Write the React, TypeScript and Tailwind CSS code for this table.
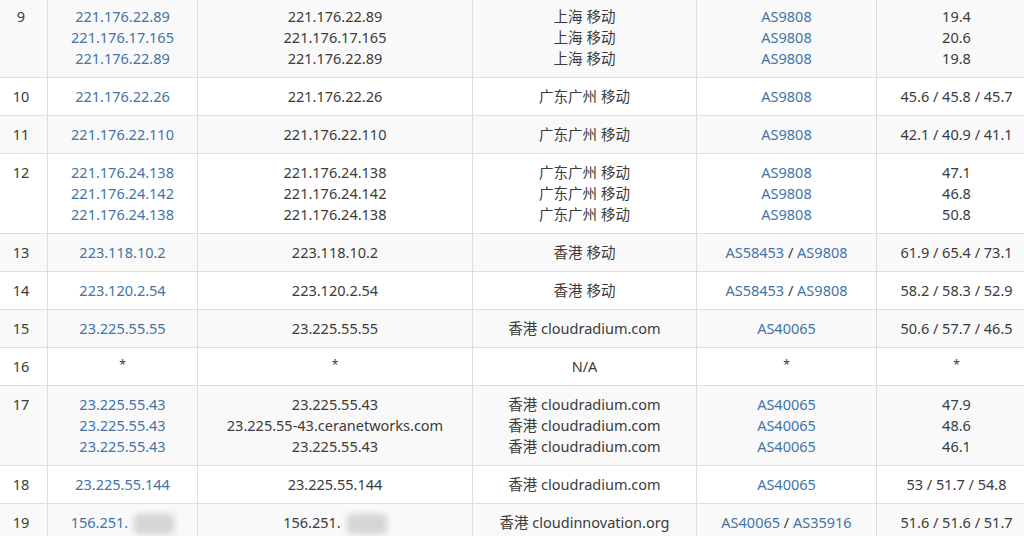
type Hop = {
  no: number;
  ips: string[];
  hosts: string[];
  locs: string[];
  as: string[][];
  rtt: string[];
  masked?: boolean;
};

const hops: Hop[] = [
  {
    no: 9,
    ips: ["221.176.22.89", "221.176.17.165", "221.176.22.89"],
    hosts: ["221.176.22.89", "221.176.17.165", "221.176.22.89"],
    locs: ["上海 移动", "上海 移动", "上海 移动"],
    as: [["AS9808"], ["AS9808"], ["AS9808"]],
    rtt: ["19.4", "20.6", "19.8"],
  },
  {
    no: 10,
    ips: ["221.176.22.26"],
    hosts: ["221.176.22.26"],
    locs: ["广东广州 移动"],
    as: [["AS9808"]],
    rtt: ["45.6 / 45.8 / 45.7"],
  },
  {
    no: 11,
    ips: ["221.176.22.110"],
    hosts: ["221.176.22.110"],
    locs: ["广东广州 移动"],
    as: [["AS9808"]],
    rtt: ["42.1 / 40.9 / 41.1"],
  },
  {
    no: 12,
    ips: ["221.176.24.138", "221.176.24.142", "221.176.24.138"],
    hosts: ["221.176.24.138", "221.176.24.142", "221.176.24.138"],
    locs: ["广东广州 移动", "广东广州 移动", "广东广州 移动"],
    as: [["AS9808"], ["AS9808"], ["AS9808"]],
    rtt: ["47.1", "46.8", "50.8"],
  },
  {
    no: 13,
    ips: ["223.118.10.2"],
    hosts: ["223.118.10.2"],
    locs: ["香港 移动"],
    as: [["AS58453", "AS9808"]],
    rtt: ["61.9 / 65.4 / 73.1"],
  },
  {
    no: 14,
    ips: ["223.120.2.54"],
    hosts: ["223.120.2.54"],
    locs: ["香港 移动"],
    as: [["AS58453", "AS9808"]],
    rtt: ["58.2 / 58.3 / 52.9"],
  },
  {
    no: 15,
    ips: ["23.225.55.55"],
    hosts: ["23.225.55.55"],
    locs: ["香港 cloudradium.com"],
    as: [["AS40065"]],
    rtt: ["50.6 / 57.7 / 46.5"],
  },
  {
    no: 16,
    ips: ["*"],
    hosts: ["*"],
    locs: ["N/A"],
    as: [["*"]],
    rtt: ["*"],
  },
  {
    no: 17,
    ips: ["23.225.55.43", "23.225.55.43", "23.225.55.43"],
    hosts: ["23.225.55.43", "23.225.55-43.ceranetworks.com", "23.225.55.43"],
    locs: ["香港 cloudradium.com", "香港 cloudradium.com", "香港 cloudradium.com"],
    as: [["AS40065"], ["AS40065"], ["AS40065"]],
    rtt: ["47.9", "48.6", "46.1"],
  },
  {
    no: 18,
    ips: ["23.225.55.144"],
    hosts: ["23.225.55.144"],
    locs: ["香港 cloudradium.com"],
    as: [["AS40065"]],
    rtt: ["53 / 51.7 / 54.8"],
  },
  {
    no: 19,
    ips: ["156.251."],
    hosts: ["156.251."],
    locs: ["香港 cloudinnovation.org"],
    as: [["AS40065", "AS35916"]],
    rtt: ["51.6 / 51.6 / 51.7"],
    masked: true,
  },
];

// blurred-out tail of a masked address
const Blur = () => (
  <span className="inline-block align-middle ml-[6px] w-[40px] h-[20px] bg-[#d4d4d4] blur-[3px] rounded-sm" />
);

const Star = () => (
  <span className="text-[12px] leading-[0] text-[#3b3b3b] relative top-[-3px]">*</span>
);

const cell = "border border-[#dedede] px-2 py-2 align-top text-center";

const App = () => {
  return (
    <div
      className="w-[1024px] h-[536px] overflow-hidden bg-white text-[#3b3b3b] text-[14.5px] leading-[21px]"
      style={{ fontFamily: '"Noto Sans", "Noto Sans CJK SC", sans-serif' }}
    >
      <table className="border-collapse table-fixed w-[1042px] ml-[-6px] mt-[-3px]">
        <colgroup>
          <col className="w-[53px]" />
          <col className="w-[150px]" />
          <col className="w-[275px]" />
          <col className="w-[224px]" />
          <col className="w-[180px]" />
          <col className="w-[160px]" />
        </colgroup>
        <tbody>
          {hops.map((h, i) => (
            <tr key={h.no} className={i % 2 === 0 ? "bg-[#f9f9f9]" : "bg-white"}>
              <td className={cell}>{h.no}</td>
              <td className={cell}>
                {h.ips.map((ip, k) => (
                  <div key={k} className="text-[#4274a8]">
                    {ip === "*" ? <Star /> : ip}
                    {h.masked && <Blur />}
                  </div>
                ))}
              </td>
              <td className={cell}>
                {h.hosts.map((x, k) => (
                  <div key={k}>
                    {x === "*" ? <Star /> : x}
                    {h.masked && <Blur />}
                  </div>
                ))}
              </td>
              <td className={cell + " whitespace-nowrap"}>
                {h.locs.map((x, k) => (
                  <div key={k}>{x}</div>
                ))}
              </td>
              <td className={cell}>
                {h.as.map((line, k) => (
                  <div key={k}>
                    {line.map((a, j) => (
                      <span key={j}>
                        {j > 0 && " / "}
                        {a === "*" ? <Star /> : <span className="text-[#4274a8]">{a}</span>}
                      </span>
                    ))}
                  </div>
                ))}
              </td>
              <td className={cell}>
                {h.rtt.map((x, k) => (
                  <div key={k}>{x === "*" ? <Star /> : x}</div>
                ))}
              </td>
            </tr>
          ))}
        </tbody>
      </table>
    </div>
  );
};

export default App;
